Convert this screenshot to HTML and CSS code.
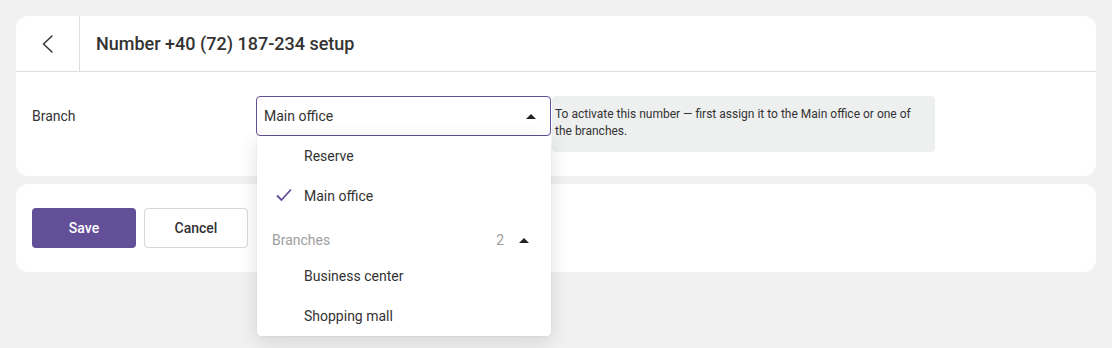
FILE: index.html
```html
<!DOCTYPE html>
<html lang="en">
<head>
  <meta charset="UTF-8" />
  <title>Number setup</title>
  <link rel="stylesheet" href="styles.css">
</head>
<body>

<div class="card">
  <header class="card-header">
    <button class="back-btn" title="Back">
      <svg width="16" height="20" viewBox="0 0 16 20"><path d="M12 2 L3.5 10 L12 18" fill="none" stroke="#333" stroke-width="1.5" stroke-linecap="round" stroke-linejoin="round"/></svg>
    </button>
    <h1 class="title">Number +40 (72) 187-234 setup</h1>
  </header>

  <div class="card-body">
    <div class="field-row">
      <div class="field-label">Branch</div>
      <div class="select-wrap">
        <div class="select">
          <span>Main office</span>
          <span class="caret"></span>
        </div>
        <ul class="dropdown">
          <li class="option">Reserve</li>
          <li class="option selected">
            <svg class="check" width="18" height="16" viewBox="0 0 18 16"><path d="M2 8.5 L6.5 13 L16 2.5" fill="none" stroke="#634e98" stroke-width="1.8" stroke-linejoin="round"/></svg>
            Main office
          </li>
          <li class="group">
            <span>Branches</span>
            <span class="group-count">2</span>
            <span class="caret"></span>
          </li>
          <li class="option">Business center</li>
          <li class="option">Shopping mall</li>
        </ul>
      </div>
      <div class="hint">To activate this number — first assign it to the Main office or one of the branches.</div>
    </div>
  </div>
</div>

<div class="card actions">
  <button class="btn btn-primary">Save</button>
  <button class="btn btn-default">Cancel</button>
</div>

</body>
</html>
```

FILE: styles.css
```css
:root {
  --bg: #f0f1f0;
  --primary: #634e98;
  --text: #333;
  --line: #dedede;
}

html {
  min-height: 100%;
  background: var(--bg);
}

body {
  margin: 0;
  padding: 16px;
  min-height: 348px;
  box-sizing: border-box;
  background: var(--bg);
  font-family: Roboto, "Liberation Sans", sans-serif;
  font-size: 14px;
  color: var(--text);
}

.card {
  background: #fff;
  border-radius: 12px;
}

.card + .card {
  margin-top: 8px;
}

.card-header {
  display: flex;
  align-items: stretch;
  height: 55px;
  border-bottom: 1px solid var(--line);
}

.back-btn {
  width: 64px;
  border: none;
  border-right: 1px solid var(--line);
  background: transparent;
  display: flex;
  align-items: center;
  justify-content: center;
  padding: 0;
  cursor: pointer;
}

.title {
  margin: 0;
  padding-left: 16px;
  display: flex;
  align-items: center;
  font-size: 18px;
  font-weight: 500;
  color: var(--text);
}

.card-body {
  padding: 24px 16px;
}

.field-row {
  display: flex;
  align-items: flex-start;
}

.field-label {
  width: 224px;
  line-height: 40px;
}

.select-wrap {
  position: relative;
  width: 295px;
}

.select {
  height: 40px;
  box-sizing: border-box;
  border: 1px solid var(--primary);
  border-radius: 4px;
  padding: 0 14px 0 7px;
  display: flex;
  align-items: center;
  justify-content: space-between;
}

.caret {
  width: 0;
  height: 0;
  border-left: 5px solid transparent;
  border-right: 5px solid transparent;
  border-bottom: 5px solid #222;
}

.dropdown {
  position: absolute;
  top: 40px;
  left: 1px;
  right: 0;
  margin: 0;
  padding: 0;
  list-style: none;
  background: #fff;
  border-radius: 0 0 4px 4px;
  box-shadow: 0 0 1px rgba(0,0,0,0.25), 0 6px 20px rgba(0,0,0,0.12);
  z-index: 5;
}

.option {
  height: 40px;
  display: flex;
  align-items: center;
  padding-left: 47px;
  position: relative;
}

.check {
  position: absolute;
  left: 18px;
  top: 11px;
}

.group {
  margin-top: 8px;
  height: 32px;
  display: flex;
  align-items: center;
  padding: 0 22px 0 15px;
  color: #9e9e9e;
}

.group span:first-child {
  flex: 1;
}

.group-count {
  margin-right: 15px;
}

.hint {
  width: 383px;
  box-sizing: border-box;
  margin-left: 1px;
  min-height: 56px;
  padding: 10px 20px 10px 3px;
  background: #eeefef;
  border-radius: 4px;
  font-size: 12px;
  line-height: 17px;
}

.actions {
  display: flex;
  gap: 8px;
  padding: 24px 16px;
}

.btn {
  width: 104px;
  height: 40px;
  border-radius: 4px;
  font-family: inherit;
  font-size: 14px;
  font-weight: 500;
  cursor: pointer;
}

.btn-primary {
  background: var(--primary);
  border: none;
  color: #fff;
}

.btn-default {
  background: #fff;
  border: 1px solid #d9d9d9;
  color: var(--text);
}
```
